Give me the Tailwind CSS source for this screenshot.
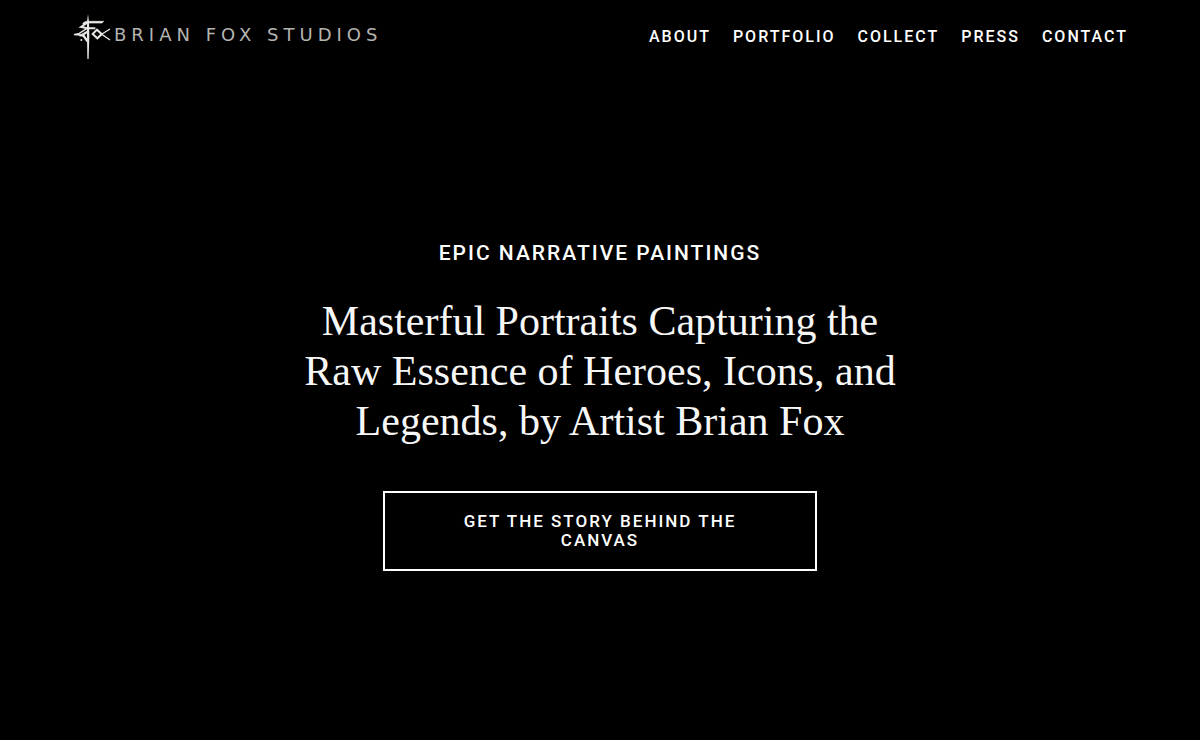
<!DOCTYPE html>
<html lang="en">

<head>
    <meta charset="UTF-8" />
    <meta name="viewport" content="width=device-width, initial-scale=1.0" />
    <title>Brian Fox Studios</title>
    <script src="https://cdn.jsdelivr.net/npm/@tailwindcss/browser@4"></script>
</head>

<body class="flex min-h-screen flex-col bg-black font-['Roboto',sans-serif] text-white">
    <header class="flex items-center justify-between px-[6%] pt-3">
        <a href="#" class="flex items-center" aria-label="Brian Fox Studios home">
            <svg viewBox="0 0 126 144" class="h-12 w-[42px] shrink-0" fill="none" stroke="#e8e8e4" aria-hidden="true">
                <!-- sword -->
                <path d="M48 5 L51 30 L52 70 L50 140 L48 141 L46 140 L45 70 L45 30 Z" fill="#e8e8e4" stroke="none" />
                <!-- F -->
                <path d="M32 34 Q40 26 50 28 H95 L90 33 H52 L42 36 L33 40" fill="#e8e8e4" stroke-width="2" />
                <path d="M44 33 L27 45 L46 49 H70" stroke-width="6" />
                <path d="M44 50 L22 64 L6 68 L27 69 L46 58" stroke-width="4" />
                <path d="M22 70 L34 71 L46 88" stroke-width="6" />
                <path d="M45 62 L34 68 L45 84" stroke-width="4" />
                <circle cx="28" cy="84" r="3" fill="#e8e8e4" stroke="none" />
                <!-- o and x -->
                <path d="M75 53 L89 66 L76 79 L62 66 Z" stroke-width="6" />
                <path d="M75 53 L88 66 L114 84 M114 51 L90 66 L76 79" stroke-width="4" />
            </svg>
            <span
                class="pb-0.5 font-['DejaVu_Sans',sans-serif] text-lg leading-6 font-normal tracking-[5px] whitespace-nowrap text-[#b4b4b0] antialiased">BRIAN
                FOX STUDIOS</span>
        </a>
        <nav class="flex gap-[22px] pt-0.5 text-base leading-6 font-medium tracking-[2px]">
            <a href="#about">ABOUT</a>
            <a href="#portfolio">PORTFOLIO</a>
            <a href="#collect">COLLECT</a>
            <a href="#press">PRESS</a>
            <a href="#contact">CONTACT</a>
        </nav>
    </header>

    <main class="flex flex-1 flex-col items-center px-6 pt-[180px] pb-20 text-center">
        <p class="text-[21px] leading-[26px] font-medium tracking-[2px]">EPIC NARRATIVE PAINTINGS</p>
        <h1 class="mt-[30px] max-w-[620px] font-['Liberation_Serif',serif] text-[42px] leading-[50px] text-[#f7f7f7]">
            Masterful Portraits Capturing the Raw Essence of Heroes, Icons, and Legends, by Artist Brian Fox
        </h1>
        <button type="button"
            class="mt-[45px] w-full max-w-[434px] border-2 border-white px-16 py-[19px] text-[17px] leading-[19px] font-medium tracking-[2px]">
            GET THE STORY BEHIND THE CANVAS
        </button>
    </main>
</body>

</html>
